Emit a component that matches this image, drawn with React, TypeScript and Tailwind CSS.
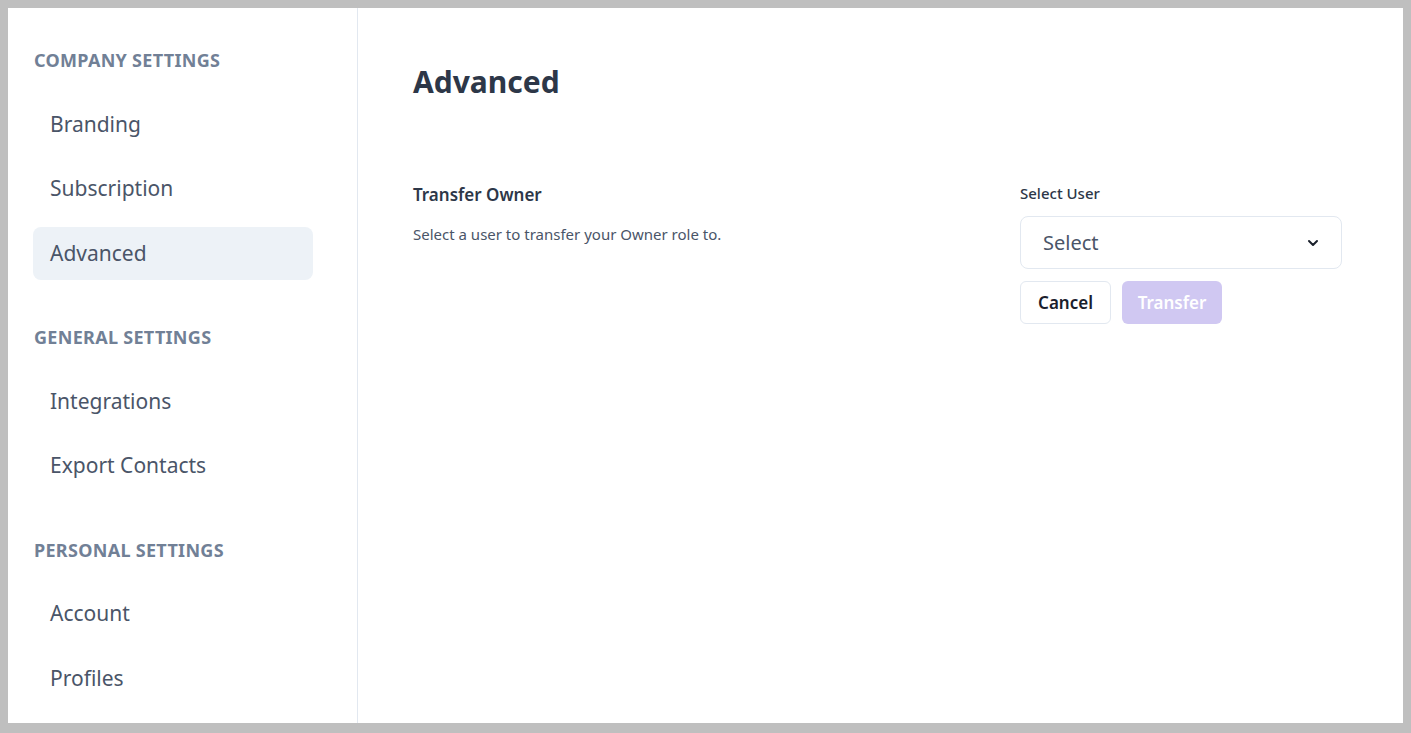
import { ChevronDown } from 'lucide-react';

const SECTIONS = [
  { title: 'COMPANY SETTINGS', items: ['Branding', 'Subscription', 'Advanced'] },
  { title: 'GENERAL SETTINGS', items: ['Integrations', 'Export Contacts'] },
  { title: 'PERSONAL SETTINGS', items: ['Account', 'Profiles'] },
];

const ACTIVE = 'Advanced';

function Sidebar() {
  return (
    <aside className="w-[350px] shrink-0 border-r border-[#e2e8f0] pl-[25px] pt-[40px] flex flex-col gap-[45px]">
      {SECTIONS.map(section => (
        <div key={section.title}>
          <div className="pl-px text-[18px] leading-[24px] font-bold tracking-[0.3px] text-[#718096] mb-[26px]">
            {section.title}
          </div>
          <div className="flex flex-col gap-[11.5px]">
            {section.items.map(item => (
              <div
                key={item}
                className={`w-[280px] h-[53px] flex items-center pl-[17px] rounded-lg text-[21px] text-[#4a5568] ${
                  item === ACTIVE ? 'bg-[#edf2f7]' : ''
                }`}
              >
                {item}
              </div>
            ))}
          </div>
        </div>
      ))}
    </aside>
  );
}

export default function App() {
  return (
    <div
      className="h-screen bg-[#bfbfbf] pt-2 pl-2 pr-2 pb-[10px]"
      style={{ fontFamily: '"Noto Sans", "Open Sans", sans-serif' }}
    >
      <div className="h-full bg-white flex">
        <Sidebar />

        {/* Main */}
        <main className="flex-1 pl-[55px] pr-[61px] pt-[56px]">
          <h1 className="text-[30px] leading-[36px] font-bold text-[#2d3748]">Advanced</h1>

          <div className="mt-[83px] flex">
            <div className="flex-1">
              <div className="text-[17px] leading-[24px] font-semibold text-[#2d3748]">Transfer Owner</div>
              <div className="mt-[17px] text-[15px] leading-[20px] text-[#4a5568]">
                Select a user to transfer your Owner role to.
              </div>
            </div>

            <div className="w-[322px]">
              <div className="text-[15px] leading-[20px] font-medium text-[#2d3748]">Select User</div>
              <button className="mt-[13px] w-full h-[53px] border border-[#e2e8f0] rounded-lg flex items-center justify-between pl-[22px] pr-[20px] text-[20px] text-[#4a5568]">
                <span>Select</span>
                <ChevronDown className="w-4 h-4 text-[#1a202c]" strokeWidth={3} />
              </button>
              <div className="mt-3 flex gap-[11px]">
                <button className="w-[91px] h-[43px] border border-[#e2e8f0] rounded-md text-[17px] font-semibold text-[#1a202c]">
                  Cancel
                </button>
                <button className="w-[100px] h-[43px] rounded-md bg-[#d0c8f2] text-[17px] font-semibold text-white">
                  Transfer
                </button>
              </div>
            </div>
          </div>
        </main>
      </div>
    </div>
  );
}
